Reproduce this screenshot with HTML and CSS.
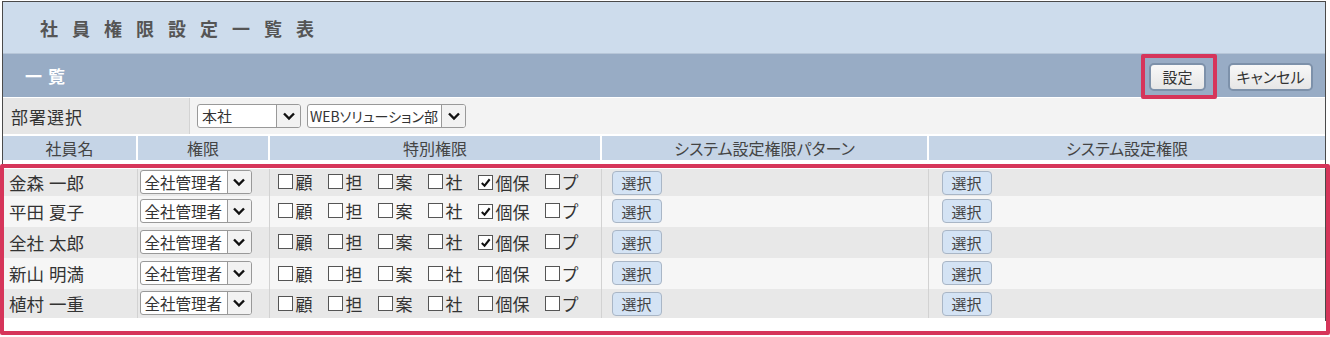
FILE: index.html
```html
<!DOCTYPE html>
<html lang="ja">
  <head>
    <meta charset="UTF-8" />
    <title>社員権限設定一覧表</title>
    <link rel="stylesheet" href="styles.css">
  </head>
  <body>
    <div class="sheet">
      <div class="title-bar">
        <h1 class="title">社員権限設定一覧表</h1>
      </div>

      <div class="section-bar">
        <h2 class="section-title">一覧</h2>
        <div class="actions">
          <button class="btn btn-save">設定</button>
          <button class="btn btn-cancel">キャンセル</button>
        </div>
      </div>

      <div class="dept-row">
        <div class="dept-label">部署選択</div>
        <div class="dept-fields">
          <div class="select select-office"><span class="select-text">本社</span><span class="arrow"><svg viewBox="0 0 14 10"><path d="M2 2.5 L7 7.5 L12 2.5" /></svg></span></div>
          <div class="select select-dept"><span class="select-text">WEBソリューション部</span><span class="arrow"><svg viewBox="0 0 14 10"><path d="M2 2.5 L7 7.5 L12 2.5" /></svg></span></div>
        </div>
      </div>

      <table class="staff">
        <colgroup>
          <col class="c-name" />
          <col class="c-role" />
          <col class="c-special" />
          <col class="c-pattern" />
          <col />
        </colgroup>
        <thead>
          <tr>
            <th>社員名</th>
            <th>権限</th>
            <th>特別権限</th>
            <th>システム設定権限パターン</th>
            <th>システム設定権限</th>
          </tr>
        </thead>
        <tbody id="rows"></tbody>
      </table>
    </div>

    <!-- annotation frames -->
    <div class="mark mark-save"></div>
    <div class="mark mark-table"></div>

    <script>
      const staff = [
        { name: "金森 一郎", kojin: true },
        { name: "平田 夏子", kojin: true },
        { name: "全社 太郎", kojin: true },
        { name: "新山 明満", kojin: false },
        { name: "植村 一重", kojin: false },
      ];

      const arrow =
        '<span class="arrow"><svg viewBox="0 0 14 10"><path d="M2 2.5 L7 7.5 L12 2.5" /></svg></span>';
      const tick =
        '<svg viewBox="0 0 14 14"><path d="M3 7.5 L6 10.5 L11.5 3.5" /></svg>';

      function check(label, on) {
        return `<span class="chk"><span class="box">${on ? tick : ""}</span>${label}</span>`;
      }

      document.querySelector("#rows").innerHTML = staff
        .map((s) => {
          return `<tr>
            <td class="name">${s.name}</td>
            <td class="role"><div class="select select-role"><span class="select-text">全社管理者</span>${arrow}</div></td>
            <td class="special">${check("顧")}${check("担")}${check("案")}${check("社")}${check("個保", s.kojin)}${check("プ")}</td>
            <td class="pattern"><button class="pick">選択</button></td>
            <td class="perm"><button class="pick">選択</button></td>
          </tr>`;
        })
        .join("");
    </script>
  </body>
</html>
```

FILE: styles.css
```css
*,
*::before,
*::after {
  box-sizing: border-box;
}

body {
  margin: 0;
  padding: 1px 0 0 2px;
  font-family: "Noto Sans CJK JP", "Noto Sans", sans-serif;
  font-feature-settings: "palt";
  color: #333;
  background: #fff;
}

.sheet {
  width: 1324px;
  border: 1px solid #4a4a4a;
  border-bottom: none;
  background: #fff;
}

/* title */

.title-bar {
  height: 52px;
  background-color: #cddcec;
  border-bottom: 1px solid #b7c6d8;
  display: flex;
  align-items: center;
  padding-left: 37px;
}

.title {
  margin: 0;
  font-size: 18px;
  font-weight: bold;
  letter-spacing: 14px;
  color: #555;
}

/* section bar */

.section-bar {
  height: 43px;
  background-color: #98acc5;
  display: flex;
  align-items: center;
  justify-content: space-between;
  padding: 0 12px 0 22px;
}

.section-title {
  margin: 0;
  font-size: 17px;
  font-weight: bold;
  letter-spacing: 6px;
  color: #fff;
}

.actions {
  display: flex;
  gap: 22px;
  padding-top: 2px;
}

.btn {
  height: 28px;
  padding: 0;
  font-family: inherit;
  font-feature-settings: "palt";
  font-size: 15px;
  color: #333;
  background: linear-gradient(#f8f8f8, #e6e6e6);
  border: 2px solid #7d91aa;
  border-radius: 5px;
}

.btn-save {
  width: 57px;
}

.btn-cancel {
  width: 85px;
}

/* department */

.dept-row {
  display: flex;
  height: 39px;
  background-color: #f3f3f3;
  border-top: 1px solid #fff;
  border-bottom: 2px solid #fff;
}

.dept-label {
  width: 187px;
  background-color: #e6e6e6;
  border-right: 1px solid #d3d3d3;
  font-size: 17px;
  letter-spacing: 1px;
  display: flex;
  align-items: center;
  padding-left: 8px;
}

.dept-fields {
  display: flex;
  align-items: center;
  gap: 6px;
  padding-left: 7px;
}

.select {
  display: flex;
  height: 24px;
  background: #fff;
  border: 1px solid #999;
  border-radius: 3px;
  font-size: 15px;
  overflow: hidden;
}

.select-text {
  flex: 1;
  padding-left: 4px;
  line-height: 22px;
  white-space: nowrap;
}

.arrow {
  width: 24px;
  border-left: 1px solid #999;
  background: #f2f2f2;
  display: flex;
  align-items: center;
  justify-content: center;
}

.arrow svg {
  width: 14px;
  height: 10px;
  fill: none;
  stroke: #111;
  stroke-width: 2.4;
}

.select-office {
  width: 104px;
}

.select-dept {
  width: 159px;
}

.select-dept .select-text {
  font-size: 14px;
  padding-left: 2px;
}

.select-role {
  width: 112px;
}

.select-role .select-text {
  font-size: 15.5px;
}

/* table */

.staff {
  width: 100%;
  border-collapse: collapse;
  table-layout: fixed;
}

.c-name {
  width: 134px;
}

.c-role {
  width: 132px;
}

.c-special {
  width: 332px;
}

.c-pattern {
  width: 327px;
}

.staff th {
  height: 25px;
  padding: 0;
  background-color: #c5d4e6;
  border-left: 2px solid #fff;
  font-size: 16px;
  font-weight: normal;
  color: #444;
  border-bottom: 9px solid #fff;
}

.staff th:first-child {
  border-left: none;
}

.staff td {
  height: 31px;
  padding: 0;
  border-left: 1px solid #d2d2d2;
  font-size: 16px;
  white-space: nowrap;
}

.staff td:first-child {
  border-left: none;
}

.staff tbody tr:nth-child(odd) {
  background-color: #e8e8e8;
}

.staff tbody tr:nth-child(even) {
  background-color: #f6f6f6;
}

.staff tbody tr:last-child td {
  border-bottom: 3px solid #fff;
}

.name {
  padding-left: 6px !important;
  font-size: 17.5px !important;
  word-spacing: 1px;
}

.role {
  padding-left: 2px !important;
}

.special {
  padding-left: 8px !important;
}

.chk {
  display: inline-flex;
  align-items: center;
  margin-right: 15px;
  font-size: 17px;
}

.box {
  width: 15px;
  height: 15px;
  margin-right: 3px;
  border: 1px solid #555;
  background: #fff;
  display: inline-flex;
}

.box svg {
  width: 13px;
  height: 13px;
  fill: none;
  stroke: #111;
  stroke-width: 2.2;
}

.pattern {
  padding-left: 10px !important;
}

.perm {
  padding-left: 13px !important;
}

.pick {
  width: 50px;
  height: 24px;
  padding: 0;
  font-family: inherit;
  font-size: 15px;
  color: #444;
  background-color: #d4e3f4;
  border: 1px solid #a9b6c6;
  border-radius: 4px;
}

/* red highlight frames drawn over the screen */

.mark {
  position: absolute;
  border: 4px solid #d6355a;
  border-radius: 2px;
}

.mark-save {
  left: 1141px;
  top: 54px;
  width: 76px;
  height: 45px;
}

.mark-table {
  left: 0;
  top: 164px;
  width: 1330px;
  height: 171px;
}
```
